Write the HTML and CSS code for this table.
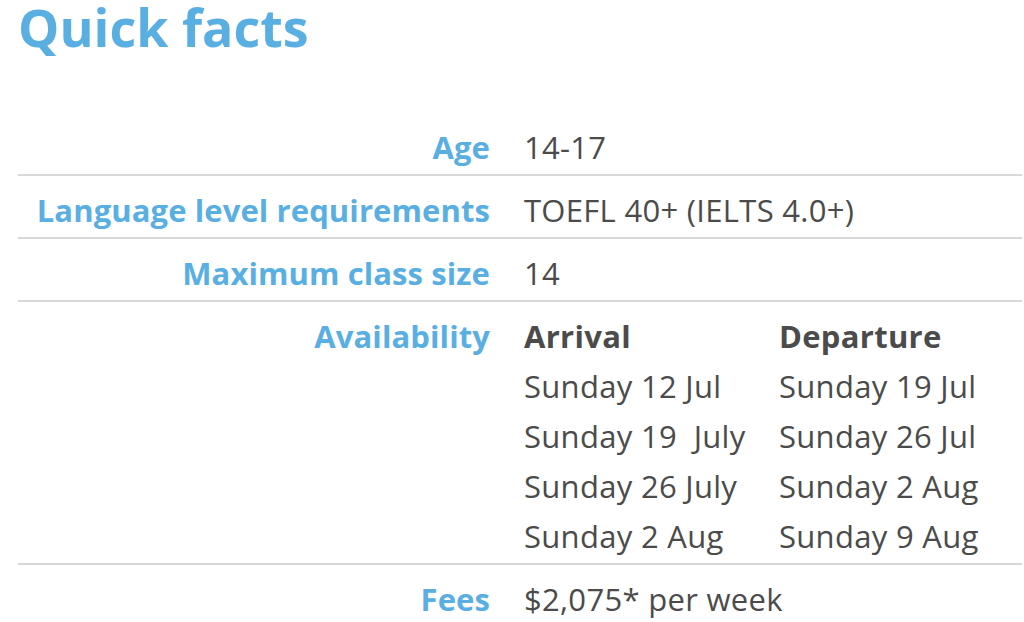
FILE: index.html
```html
<!DOCTYPE html>
<html>
<head>
<meta charset="utf-8">
<link rel="stylesheet" href="styles.css">
</head>
<body>
<main class="page">
  <h1 class="title">Quick facts</h1>
  <div class="facts">
    <div class="row">
      <div class="label">Age</div>
      <div class="value">14-17</div>
    </div>
    <div class="row">
      <div class="label">Language level requirements</div>
      <div class="value">TOEFL 40+ (IELTS 4.0+)</div>
    </div>
    <div class="row">
      <div class="label">Maximum class size</div>
      <div class="value">14</div>
    </div>
    <div class="row">
      <div class="label">Availability</div>
      <div class="value dates">
        <div class="head">Arrival</div><div class="head">Departure</div>
        <div>Sunday 12 Jul</div><div>Sunday 19 Jul</div>
        <div>Sunday 19&nbsp; July</div><div>Sunday 26 Jul</div>
        <div>Sunday 26 July</div><div>Sunday 2 Aug</div>
        <div>Sunday 2 Aug</div><div>Sunday 9 Aug</div>
      </div>
    </div>
    <div class="row last">
      <div class="label">Fees</div>
      <div class="value">$2,075* per week</div>
    </div>
  </div>
</main>
</body>
</html>
```

FILE: styles.css
```css
html, body {
  margin: 0;
  padding: 0;
  background: #ffffff;
}
.page {
  padding: 0 2px 0 18px;
  font-family: "Open Sans", Lato, sans-serif;
}
.title {
  margin: 0;
  padding-top: 0;
  height: 113px;
  font-size: 52px;
  line-height: 54px;
  font-weight: 700;
  color: #5aafe2;
}
.facts {
  display: flex;
  flex-direction: column;
}
.row {
  display: grid;
  grid-template-columns: 472px 1fr;
  column-gap: 34px;
  padding: 16px 0 9px;
  border-bottom: 2px solid #d8d8d8;
  font-size: 31px;
  line-height: 36px;
}
.row.last {
  border-bottom: none;
}
.label {
  text-align: right;
  font-weight: 700;
  letter-spacing: 0.1px;
  color: #5aafe2;
}
.value {
  color: #4b4b4b;
  letter-spacing: 0.3px;
}
.dates {
  display: grid;
  grid-template-columns: 255px 1fr;
  row-gap: 14px;
}
.head {
  font-weight: 700;
}
```
